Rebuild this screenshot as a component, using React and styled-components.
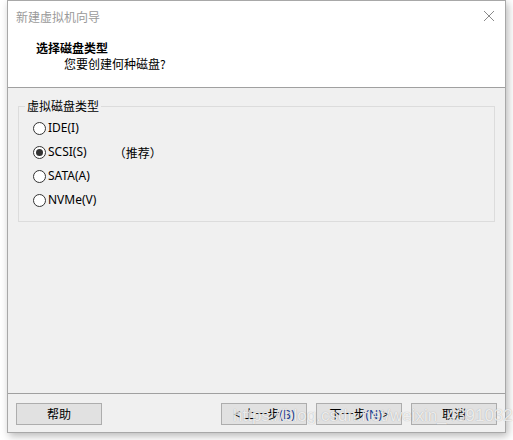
import React from 'react';
import styled, { createGlobalStyle } from 'styled-components';

const Global = createGlobalStyle`
  html, body {
    margin: 0;
    padding: 0;
    background: #ffffff;
  }
  body {
    font-family: "Noto Sans", "Noto Sans CJK SC", sans-serif;
    font-size: 12px;
    color: #000;
  }
`;

const Page = styled.div`
  width: 513px;
  height: 440px;
  position: relative;
  overflow: hidden;
`;

const Window = styled.div`
  margin-left: 7px;
  width: 497px;
  height: 431px;
  border: 1px solid #a8a8a8;
  background: #f0f0f0;
  display: flex;
  flex-direction: column;
  box-shadow: 2px 3px 8px rgba(0, 0, 0, 0.28);
`;

const Top = styled.div`
  height: 86px;
  background: #ffffff;
  border-bottom: 1px solid #a0a0a0;
  display: flex;
  flex-direction: column;
`;

const TitleBar = styled.div`
  height: 30px;
  display: flex;
  align-items: center;
  justify-content: space-between;
  padding: 0 10px 0 8px;
`;

const TitleText = styled.span`
  color: #9a9a9a;
  font-size: 12px;
  font-family: "Noto Sans CJK SC", sans-serif;
`;

const Close = styled.svg`
  width: 12px;
  height: 12px;
`;

const Heading = styled.div`
  padding-left: 28px;
  margin-top: 8px;
  font-weight: bold;
  font-size: 12px;
  line-height: 17px;
  font-family: "Noto Sans CJK SC", sans-serif;
`;

const SubHeading = styled.div`
  padding-left: 56px;
  font-size: 12px;
  line-height: 16px;
  font-family: "Noto Sans CJK SC", sans-serif;
`;

const Content = styled.div`
  flex: 1;
  padding: 10px 10px 0;
`;

const Group = styled.fieldset`
  margin: 0;
  padding: 2px 6px 9px;
  border: 1px solid #dcdcdc;
`;

const Legend = styled.legend`
  padding: 0 2px;
  line-height: 16px;
  font-family: "Noto Sans CJK SC", sans-serif;
`;

const Option = styled.label`
  height: 24px;
  display: flex;
  align-items: center;
  padding-left: 8px;
`;

const Circle = styled.span`
  width: 11px;
  height: 11px;
  border: 1px solid #333;
  border-radius: 50%;
  background: #fff;
  display: flex;
  align-items: center;
  justify-content: center;
  margin-right: 2px;
  &::after {
    content: '';
    width: 7px;
    height: 7px;
    border-radius: 50%;
    background: ${p => (p.$checked ? '#333' : 'transparent')};
  }
`;

const OptionText = styled.span`
  line-height: 16px;
`;

const Note = styled.span`
  margin-left: 27px;
  font-family: "Noto Sans CJK SC", sans-serif;
`;

const Footer = styled.div`
  height: 39px;
  border-top: 1px solid #a0a0a0;
  display: flex;
  align-items: flex-start;
  padding: 9px 8px 0;
  box-sizing: border-box;
`;

const Button = styled.button`
  width: 86px;
  height: 22px;
  margin: 0;
  margin-left: ${p => p.$gap || 0}px;
  padding: 0;
  border: 1px solid #adadad;
  background: #e1e1e1;
  font-family: "Noto Sans", "Noto Sans CJK SC", sans-serif;
  font-size: 12px;
  color: #000;
  white-space: nowrap;
  display: flex;
  align-items: center;
  justify-content: center;
`;

const Spacer = styled.div`
  flex: 1;
`;

const Mnemonic = styled.span`
  color: #1a3d8f;
`;

const Watermark = styled.div`
  position: absolute;
  left: 233px;
  top: 406px;
  font-family: "Liberation Sans", sans-serif;
  font-size: 17px;
  color: rgba(255, 255, 255, 0.8);
  text-shadow: 0 0 1px rgba(0, 0, 0, 0.3);
  pointer-events: none;
`;

const options = [
  { text: 'IDE(I)' },
  { text: 'SCSI(S)', checked: true, note: '（推荐）' },
  { text: 'SATA(A)' },
  { text: 'NVMe(V)' },
];

export default function App() {
  return (
    <Page>
      <Global />
      <Window>
        <Top>
          <TitleBar>
            <TitleText>新建虚拟机向导</TitleText>
            <Close viewBox="0 0 12 12">
              <path d="M1 1 L11 11 M11 1 L1 11" stroke="#8a8a8a" strokeWidth="1" fill="none" />
            </Close>
          </TitleBar>
          <Heading>选择磁盘类型</Heading>
          <SubHeading>您要创建何种磁盘?</SubHeading>
        </Top>
        <Content>
          <Group>
            <Legend>虚拟磁盘类型</Legend>
            {options.map(o => (
              <Option key={o.text}>
                <Circle $checked={o.checked} />
                <OptionText>{o.text}</OptionText>
                {o.note && <Note>{o.note}</Note>}
              </Option>
            ))}
          </Group>
        </Content>
        <Footer>
          <Button>帮助</Button>
          <Spacer />
          <Button>&lt; 上一步<Mnemonic>(B)</Mnemonic></Button>
          <Button $gap={9}>下一步<Mnemonic>(N)</Mnemonic> &gt;</Button>
          <Button $gap={9}>取消</Button>
        </Footer>
      </Window>
      <Watermark>https://blog.csdn.net/weixin_43910320</Watermark>
    </Page>
  );
}
